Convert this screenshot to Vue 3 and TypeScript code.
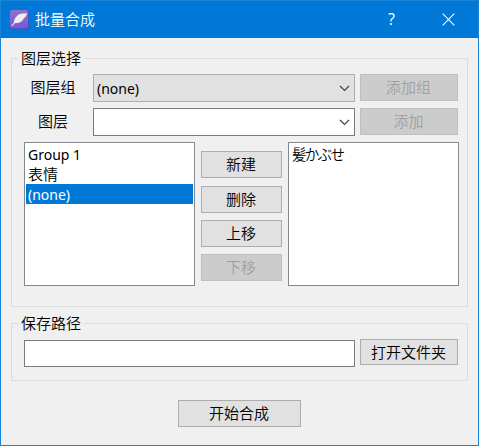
<script setup lang="ts">
import { ref } from 'vue'

const groups = ['Group 1', '表情', '(none)']
const selected = ref(2)
const actions = [
  { label: '新建', disabled: false },
  { label: '删除', disabled: false },
  { label: '上移', disabled: false },
  { label: '下移', disabled: true },
]
const path = ref('')
</script>

<template>
  <div class="window">
    <header class="titlebar">
      <svg class="logo" width="20" height="20" viewBox="0 0 20 20">
        <defs>
          <linearGradient id="logo-bg" x1="0" y1="0" x2="0" y2="1">
            <stop offset="0" stop-color="#8f74cc" />
            <stop offset="1" stop-color="#7658da" />
          </linearGradient>
        </defs>
        <rect x="1" y="0.3" width="19" height="19" rx="2.5" fill="#3f55b8" />
        <rect x="0.8" y="0" width="18.2" height="18.3" rx="2.5" fill="url(#logo-bg)" />
        <path d="M2.3 15.8 L4.9 12.6 C4.8 8.5 8.8 4.2 12.5 3.6 C14.5 3.2 16 3.8 17.6 3.1 C18 5.6 16.6 7.4 14.8 8.2 C14 10.8 10.6 13.4 6.2 13.1 L3 16.2 Z" fill="#efeeed" />
      </svg>
      <span class="title">批量合成</span>
      <span class="help">?</span>
      <svg class="close" width="13" height="13" viewBox="0 0 13 13">
        <path d="M0.7 0.7 L12.3 12.3 M12.3 0.7 L0.7 12.3" stroke="#fff" stroke-width="1.1" fill="none" />
      </svg>
    </header>

    <main class="content">
      <section class="group layers">
        <span class="legend">图层选择</span>
        <div class="row">
          <span class="label">图层组</span>
          <div class="combo grey">
            <span class="latin">(none)</span>
            <svg width="11" height="7" viewBox="0 0 11 7"><path d="M1 1 L5.5 5.5 L10 1" stroke="#444" stroke-width="1.2" fill="none" /></svg>
          </div>
          <button class="btn wide" disabled>添加组</button>
        </div>
        <div class="row">
          <span class="label">图层</span>
          <div class="combo">
            <span></span>
            <svg width="11" height="7" viewBox="0 0 11 7"><path d="M1 1 L5.5 5.5 L10 1" stroke="#444" stroke-width="1.2" fill="none" /></svg>
          </div>
          <button class="btn wide" disabled>添加</button>
        </div>
        <div class="lists">
          <ul class="list">
            <li v-for="(g, i) in groups" :key="g" :class="{ selected: i === selected, cjk: !/[a-z]/i.test(g) }" @click="selected = i">{{ g }}</li>
          </ul>
          <div class="actions">
            <button v-for="a in actions" :key="a.label" class="btn" :disabled="a.disabled">{{ a.label }}</button>
          </div>
          <ul class="list">
            <li class="kana" lang="ja">髪かぶせ</li>
          </ul>
        </div>
      </section>

      <section class="group save">
        <span class="legend">保存路径</span>
        <div class="save-row">
          <input v-model="path" class="path" type="text" />
          <button class="btn wide browse">打开文件夹</button>
        </div>
      </section>

      <button class="btn start">开始合成</button>
    </main>
  </div>
</template>

<style>
body {
  background: #f0f0f0;
}
</style>

<style scoped>
* {
  box-sizing: border-box;
}
.window {
  width: 479px;
  height: 446px;
  border: 1px solid #1883d7;
  background: #f0f0f0;
  font: 350 15px/20px 'Noto Sans CJK SC', sans-serif;
  color: #000;
}
.titlebar {
  height: 37px;
  background: #0078d7;
  color: #fff;
  display: flex;
  align-items: center;
  padding: 0 23px 0 8px;
}
.title {
  margin: -2px 0 0 6px;
  flex: 1;
}
.help {
  font-family: 'Open Sans', sans-serif;
  font-weight: 400;
  font-size: 16px;
  width: 8px;
  margin: -2px 46px 0 0;
}
.content {
  padding: 20px 10px 0;
  display: flex;
  flex-direction: column;
}
.group {
  border: 1px solid #dcdcdc;
  display: flex;
  flex-direction: column;
}
.legend {
  align-self: flex-start;
  margin: -11px 0 0 6px;
  padding: 0 3px;
  height: 21px;
  background: #f0f0f0;
}
.layers {
  height: 249px;
}
.row {
  display: flex;
  height: 28px;
  margin: 5px 0 0 12px;
}
.row + .row {
  margin-top: 6px;
}
.label {
  width: 58px;
  margin-right: 11px;
  text-align: center;
  line-height: 25px;
}
.combo {
  width: 262px;
  height: 28px;
  margin-right: 5px;
  border: 1px solid #7a7a7a;
  background: #fff;
  display: flex;
  align-items: center;
  justify-content: space-between;
  padding: 0 4px 0 3px;
}
.combo.grey {
  background: #e1e1e1;
  border-color: #adadad;
}
.latin {
  font-family: 'Noto Sans', sans-serif;
  font-weight: 400;
  font-size: 14px;
  line-height: 20px;
  padding-top: 1px;
}
.btn {
  height: 27px;
  padding: 0 1px 2px 0;
  border: 1px solid #adadad;
  background: #e1e1e1;
  color: #000;
  font: inherit;
  line-height: 23px;
}
.btn:disabled {
  background: #ccc;
  border-color: #bfbfbf;
  color: #a0a0a0;
}
.wide {
  width: 98px;
}
.lists {
  display: flex;
  margin: 6px 0 0 12px;
}
.list {
  width: 171px;
  height: 144px;
  margin: 0;
  padding: 1px;
  list-style: none;
  border: 1px solid #828790;
  background: #fff;
  font-family: 'Noto Sans', 'Noto Sans CJK SC', sans-serif;
  font-weight: 400;
  font-size: 14px;
}
.list li {
  height: 20px;
  padding-left: 2px;
  line-height: 22px;
}
.list li.cjk {
  font-family: 'Noto Sans CJK SC', sans-serif;
  font-weight: 350;
  font-size: 15px;
  line-height: 20px;
}
.list li.selected {
  background: #0078d7;
  color: #fff;
}
.actions {
  width: 81px;
  margin: 9px 6px 0;
  display: flex;
  flex-direction: column;
  gap: 7px;
}
.actions .btn:first-child {
  margin-bottom: 1px;
}
.list .kana {
  font-family: 'Noto Sans CJK JP', sans-serif;
  font-weight: 350;
  font-size: 14.5px;
  letter-spacing: -1.7px;
  line-height: 20px;
}
.save {
  height: 58px;
  margin-top: 16px;
}
.save-row {
  display: flex;
  margin: 5px 0 0 12px;
}
.path {
  width: 331px;
  height: 27px;
  margin: 1px 5px 0 0;
  border: 1px solid #7a7a7a;
  background: #fff;
  font: inherit;
  outline: none;
}
.browse {
  height: 26px;
}
.start {
  width: 123px;
  margin-top: 19px;
  align-self: center;
}
</style>
